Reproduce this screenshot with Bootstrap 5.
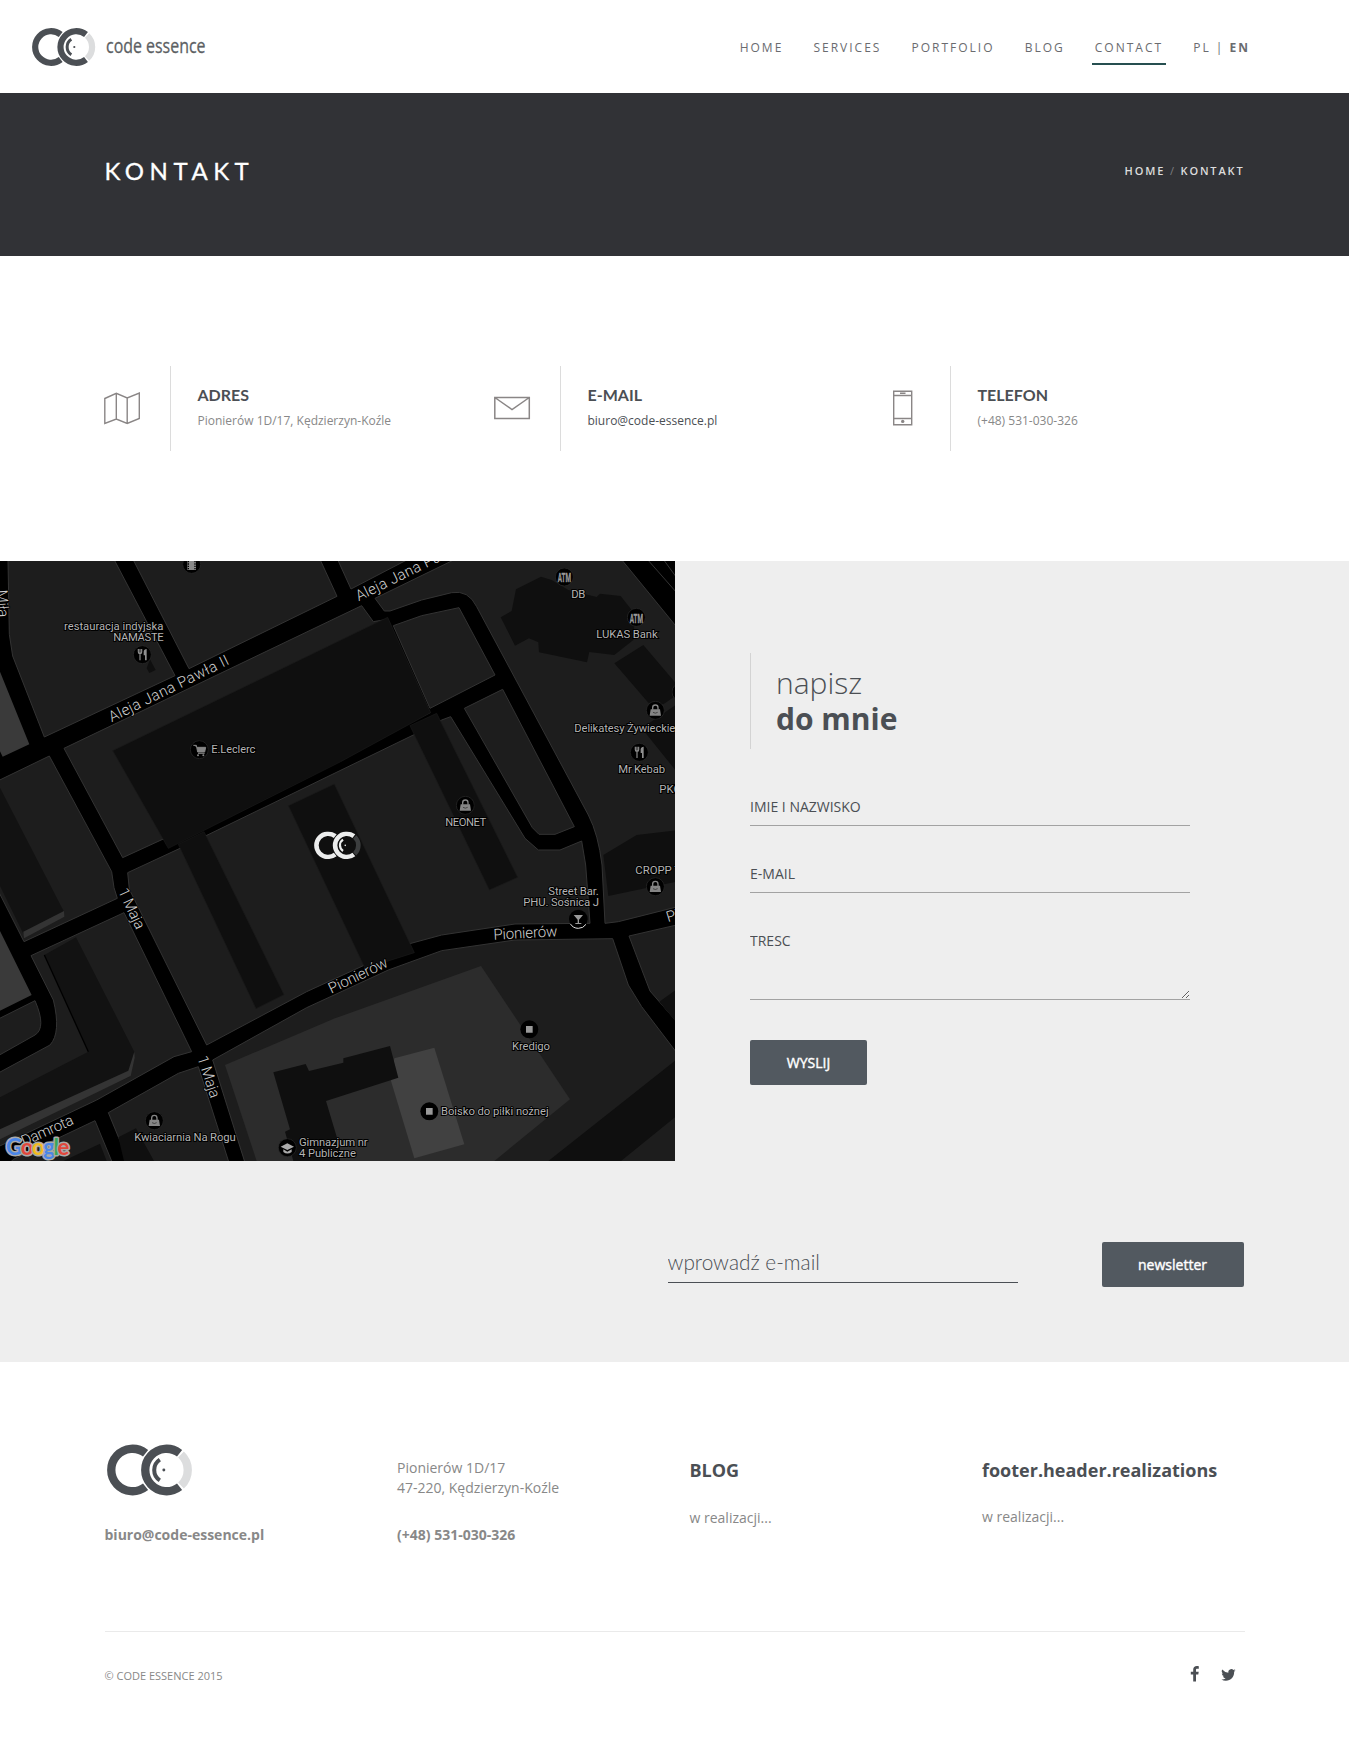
<!DOCTYPE html>
<html lang="pl">
<head>
<meta charset="utf-8">
<meta name="viewport" content="width=device-width, initial-scale=1">
<title>Kontakt - code essence</title>
<link href="https://cdn.jsdelivr.net/npm/bootstrap@5.3.0/dist/css/bootstrap.min.css" rel="stylesheet">
<style>
body{font-family:"Open Sans",sans-serif;font-size:14px;line-height:20px;color:#888;background:#fff}
a{color:inherit;text-decoration:none}
.container{max-width:1170px;padding:0 15px}
.site-head{height:93px;padding:0 96px 0 32px}
.main-nav{font-size:12px;letter-spacing:2px;gap:24.1px;color:#6a6b6f}
.main-nav .nav-link{padding:9.5px 3px 5.5px;border-bottom:2px solid transparent;color:inherit;line-height:20px}
.main-nav .nav-link.active{border-color:#264f50}
.title-band{height:163px;background:#313236;padding-bottom:7px}
.title-band h1{font:400 24px/30px Lato,sans-serif;letter-spacing:5.5px;color:#fff;-webkit-text-stroke:.3px #fff}
.crumbs{font-size:11px;font-weight:600;letter-spacing:1.85px;color:#dcdcdc}
.crumbs i{font-style:normal;font-weight:400;color:#7d7e80}
.info{padding:110px 0}
.info-item{width:390px;height:85px;flex:none}
.info-item:last-child{width:360px}
.info-icon{width:65px;padding-right:28px}
.info-icon svg{display:inline-block;margin:0 0 2px -1px}
.info-text{border-left:1px solid #dcdcdc;padding:19px 0 0 27px;height:85px;font-size:12px}
.info-text h2{font:700 16px/20px Lato,sans-serif;color:#4b4f54;margin:0 0 6px}
.ink{color:#4b4f54}
.gray-zone{background:#eee;height:801px}
.map-box{width:675px;height:600px;background:#000}
.write{padding:92px 0 0 75px;width:515px}
.write-head{border-left:1px solid #d3d3d3;padding:12px 0 12px 25px;font-size:30px;line-height:36px;color:#4b4f54;font-weight:300;margin-bottom:39px}
.write-head b{font-weight:700}
.line-field{display:block;width:100%;border:0;border-bottom:1px solid #a2a2a2;background:none;padding:0;color:#4b4f54;height:38px;margin-bottom:29px;border-radius:0;outline:0}
.line-field::placeholder{color:#4b4f54;opacity:1}
textarea.line-field{height:78px;padding-top:9px;margin-bottom:40px;resize:both}
.btn-slate{background:#525960;color:#fff;border:0;border-radius:2px;height:45px;width:117px;font-size:14px;font-weight:400;-webkit-text-stroke:.4px #fff;padding:0}
.news{padding-top:81px}
.news .btn-slate{width:142px;margin-right:1px}
.news .line-field{width:350px;height:41px;margin:0 84px 0 0;padding-bottom:2px;border-color:#4b4f54;font:300 20.8px/24px Lato,sans-serif}
.foot-cols{height:269px;padding-top:82px}
.foot-cols h3{font-size:18px;font-weight:700;line-height:24px;color:#4b4f54;margin:14px 0 25px}
.foot-addr{padding-top:14px}
.foot-end{border-top:1px solid #eaeaea;padding-top:34px}
.copy{font-size:11px}
.social{gap:21px;padding-right:9px}
.road{font:300 45px Roboto,sans-serif;fill:#d0d0d0;stroke:#000;stroke-width:5px;paint-order:stroke}
.poi{font:400 34px Roboto,sans-serif;fill:#b4b4b4;stroke:#000;stroke-width:6px;paint-order:stroke}
.bld{fill:#0f0f0f}
</style>
</head>
<body>
<svg width="0" height="0" class="position-absolute" aria-hidden="true">
  <symbol id="cc" viewBox="0 0 64 38">
    <g fill="none" stroke="currentColor" stroke-width="6.2">
      <path d="M28.7 6.55A15.8 15.8 0 1 0 28.7 31.45"/>
      <path d="M54 6.55A15.8 15.8 0 1 0 54 31.45"/>
      <path d="M55.07 7.44A15.8 15.8 0 0 1 55.07 30.56" stroke="var(--faint,#dcddde)"/>
      <path d="M39.3 11.3A9.2 9.2 0 0 0 39.3 26.7" stroke-width="3"/>
    </g>
    <circle cx="42.3" cy="19" r="1.1" fill="currentColor"/>
  </symbol>
  <symbol id="disc" viewBox="-28 -28 56 56"><circle r="27" fill="#000" stroke="#2e2e2e" stroke-width="2"/></symbol>
  <symbol id="bag" viewBox="-28 -28 56 56"><circle r="27" fill="#000" stroke="#2e2e2e" stroke-width="2"/><path d="M-14-3h28l3 19h-34z" fill="#858585"/><path d="M-8-2v-6a8 8 0 0 1 16 0v6" fill="none" stroke="#858585" stroke-width="4"/><path d="M-7 6q7 5 14 0" fill="none" stroke="#222" stroke-width="2"/></symbol>
  <symbol id="fork" viewBox="-28 -28 56 56"><circle r="27" fill="#000" stroke="#2e2e2e" stroke-width="2"/><path d="M-12-17v9q0 5 5 5t5-5v-9M-7-17v34" fill="none" stroke="#8e8e8e" stroke-width="3.5"/><path d="M13-17v34h-5V2h-4v-11q1-8 9-8z" fill="#8e8e8e"/></symbol>
  <symbol id="sq" viewBox="-28 -28 56 56"><circle r="27" fill="#000"/><path d="M-10-10h20v20h-20z" fill="#999"/></symbol>
</svg>

<header class="site-head d-flex align-items-center justify-content-between">
  <a href="#" class="ink d-flex align-items-center">
    <svg width="64" height="38"><use href="#cc"/></svg>
    <svg width="110" height="38" class="ms-2 overflow-visible"><text x="2" y="24.500" font-size="19.5" font-family="Open Sans" fill="#5c5f63" stroke="#5c5f63" stroke-width=".3" textLength="99.500" lengthAdjust="spacingAndGlyphs">code essence</text></svg>
  </a>
  <nav class="nav main-nav">
    <a class="nav-link" href="#">HOME</a>
    <a class="nav-link" href="#">SERVICES</a>
    <a class="nav-link" href="#">PORTFOLIO</a>
    <a class="nav-link" href="#">BLOG</a>
    <a class="nav-link active" href="#">CONTACT</a>
    <span class="nav-link">PL | <b>EN</b></span>
  </nav>
</header>

<section class="title-band d-flex align-items-center">
  <div class="container d-flex align-items-center justify-content-between">
    <h1 class="m-0">KONTAKT</h1>
    <div class="crumbs">HOME<i> / </i>KONTAKT</div>
  </div>
</section>

<section class="info">
  <div class="container d-flex">
    <div class="info-item d-flex align-items-center">
      <div class="info-icon"><svg width="37" height="34" fill="none" stroke="#8a8686" stroke-width="1.4"><path d="M.8 7.5 12.3 2.3 23.2 7 35.3 2v25.500L23.200 32.500 12.300 28 .8 32.500zM12.300 2.300v25.700M23.200 7v25.500"/></svg></div>
      <div class="info-text"><h2>ADRES</h2>Pionierów 1D/17, Kędzierzyn-Koźle</div>
    </div>
    <div class="info-item d-flex align-items-center">
      <div class="info-icon"><svg width="37" height="24" fill="none" stroke="#8a8686" stroke-width="1.5"><path d="M.8 1.500h34.500v21H.8zM.8 1.500l17.200 12 17.300-12"/></svg></div>
      <div class="info-text"><h2>E-MAIL</h2><a href="#" class="ink">biuro@code-essence.pl</a></div>
    </div>
    <div class="info-item d-flex align-items-center">
      <div class="info-icon text-end"><svg width="30" height="36" fill="none" stroke="#8a8686" stroke-width="1.4"><path d="M1.700 1.200h18v33.500h-18zM1.700 5.500h18M1.700 28.500h18M8 3.200h5.500"/><circle cx="10.700" cy="31.400" r="1.700" fill="#8a8686" stroke="none"/></svg></div>
      <div class="info-text"><h2>TELEFON</h2>(+48) 531-030-326</div>
    </div>
  </div>
</section>

<section class="gray-zone">
  <div class="d-flex">
    <div class="map-box">
      <svg class="d-block" width="675" height="600" viewBox="0 0 2025 1800">
        <rect width="2025" height="1800"/>
        <!-- city blocks between streets -->
        <g fill="#1d1d1d" stroke="#333" stroke-width="3">
          <path d="M24-5 28 220 38 285 133 528 525 344 342-5zM400-3 567 323 1011 106 960-5zM1013-4 1053 84 1222-4z"/>
          <path d="M1125 112 1153 150H1170L1265 117 1355 95Q1405 86 1430 137L1765 762Q1795 820 1806 912L1815 1087 1855 1082 2030 1038V198L1864-5H1365z"/>
          <path d="M1180 194 1265 164 1377 140 1485 342 1290 442zM1393 442 1508 385 1723 797 1665 820H1617L1597 800z"/>
          <path d="M192 562 1085 134 1120 182 1163 175 1290 455 505 850 490 834 368 890z"/>
          <path d="M383 935 540 862 1240 522 1325 477 1352 467 1575 832 1615 867H1680L1745 840 1757 912 1770 1087 1545 1089 1325 1122 1233 1147 1090 1214 920 1292 620 1452 388 985z"/>
          <path d="M-5 659 148 585 335 932 342 980 352 1012 72 1142-5 990z"/>
          <path d="M-5 1374 105 1319Q140 1400 105 1422L-5 1484z"/>
          <path d="M93 1184 372 1055 575 1472 522 1487 290 1617-5 1757V1536L150 1452Q184 1415 160 1317z"/>
          <path d="M325 1655 535 1537 595 1517 687 1805H387zM40 1795 285 1679 337 1805H30z"/>
          <path d="M638 1497 920 1340 1165 1227 1325 1169 1545 1137 1838 1133 1885 1272 1925 1337 2030 1475V1805H735z"/>
          <path d="M1887 1125 2030 1092V1382L1950 1290 1925 1225z"/>
          <path d="M1942-5 2030 95M1990-5 2030 50"/>
        </g>
        <path d="M-5 320 88 550 8 587-5 560zM-5 1100 95 1302-5 1352z" fill="#3a3a3a"/>
        <path d="M675 1512 1005 1372 1443 1215 1710 1615 1483 1800H770z" fill="#2c2c2c"/>
        <path d="M1183 1492 1303 1460 1393 1750 1243 1792 1173 1560z" fill="#414141"/>
        <!-- buildings -->
        <g class="bld">
          <path d="M338 569 1163 169 1292 455 1022 602 505 862z" stroke="#191919" stroke-width="2"/>
          <path d="M535 850 612 812 852 1301 768 1343zM865 734 1003 669 1243 1175 1095 1222zM1230 494 1310 457 1553 949 1468 987z" stroke="#191919" stroke-width="2"/>
          <path d="M1502 169 1535 150 1548 85 1623 47 1655 57 1705 87 1790 108 1800 98 1862 105 1905 160 1900 237 1843 282 1768 273 1761 304 1617 274 1615 244 1587 232 1545 254z"/>
          <path d="M1843 307 1930 252 2030 370V402L1990 430 1945 425zM1925 502 2030 430V632zM1810 882 1910 822 2030 808V962L1825 1005z"/>
          <path d="M820 1534 917 1509 927 1530 1030 1505V1492L1170 1455 1195 1550 978 1620 1020 1760V1800H880L855 1712 870 1705z"/>
          <path d="M1645 1800 2030 1495V1665L1863 1800zM1978 1322 2030 1285V1385z"/>
          <path d="M440 322 448 336 467 327 450 295zM355 1729 408 1702 462 1800H372zM190 1800 300 1748 320 1800z"/>
        </g>
        <path d="M0 680 192 1052 70 1118 0 975zM133 1182 228 1129 403 1472 390 1547 0 1720V1609L265 1472z" fill="#121212"/>
        <path d="M192 1050 193 1067 72 1132 70 1112zM403 1472 404 1490 392 1545 0 1735V1705L385 1529z" fill="#343434"/>
        <path d="M133 1182 265 1472" stroke="#000" stroke-width="4"/>
        <!-- street names -->
        <g class="road">
          <text transform="translate(335 484) rotate(-26.300)" textLength="396">Aleja Jana Pawła II</text>
          <text transform="translate(1076 121) rotate(-26.300)" textLength="350">Aleja Jana Pawła</text>
          <text transform="translate(-10 88) rotate(86)" textLength="82">Miła</text>
          <text transform="translate(354 990) rotate(65)" textLength="130">1 Maja</text>
          <text transform="translate(592 1490) rotate(72)" textLength="130">1 Maja</text>
          <text transform="translate(994 1298) rotate(-25.500)" textLength="192">Pionierów</text>
          <text transform="translate(1481 1136) rotate(-3)" textLength="192">Pionierów</text>
          <text transform="translate(2004 1084) rotate(-17)">Pi</text>
          <text transform="translate(72 1756) rotate(-24)" textLength="166">Damrota</text>
        </g>
        <!-- places -->
        <use href="#disc" x="547" y="-18" width="56" height="56"/><path d="M562 0h26v27h-26z" fill="#8a8a8a"/><path d="M565 0v27M585 0v27" stroke="#000" stroke-width="4" stroke-dasharray="4 3"/>
        <use href="#fork" x="399" y="253" width="56" height="56"/>
        <use href="#disc" x="570" y="538" width="56" height="56"/><path d="M580 553h9l4 20h21l3-14h-26M594 577h20" fill="#858585" stroke="#858585" stroke-width="3"/><circle cx="594" cy="583" r="3" fill="#858585"/><circle cx="610" cy="583" r="3" fill="#858585"/>
        <use href="#disc" x="1665" y="20" width="56" height="56"/><use href="#disc" x="1881" y="141" width="56" height="56"/>
        <use href="#bag" x="1938" y="420" width="56" height="56"/><use href="#fork" x="1890" y="546" width="56" height="56"/>
        <use href="#bag" x="1368" y="705" width="56" height="56"/><use href="#bag" x="1938" y="949" width="56" height="56"/>
        <use href="#disc" x="2015" y="365" width="56" height="56"/>
        <circle cx="1735" cy="1074" r="28" stroke="#ddd" stroke-width="3" stroke-dasharray="55 200" stroke-dashoffset="-17"/><path d="M1721 1062h28l-12 14v10h7v3h-18v-3h7v-10z" fill="#999"/>
        <use href="#sq" x="1560" y="1377" width="56" height="56"/><use href="#sq" x="1260" y="1623" width="56" height="56"/>
        <use href="#bag" x="435" y="1651" width="56" height="56"/>
        <use href="#disc" x="834" y="1732" width="56" height="56"/><path d="M842 1757 862 1747 882 1757 862 1767zM850 1765 862 1772 875 1765V1773Q862 1782 850 1773z" fill="#aaa"/>
        <g class="poi">
          <text x="192" y="207" textLength="298">restauracja indyjska</text><text x="340" y="240" textLength="151">NAMASTE</text>
          <text x="634" y="576" textLength="132">E.Leclerc</text>
          <text x="1714" y="111" textLength="42">DB</text><text x="1789" y="231" textLength="184">LUKAS Bank</text>
          <text x="1723" y="513" textLength="303">Delikatesy Żywieckie</text><text x="1855" y="636" textLength="140">Mr Kebab</text><text x="1978" y="696">PKO</text>
          <text x="1336" y="795" textLength="123">NEONET</text><text x="1906" y="938">CROPP T</text>
          <text x="1645" y="1002" textLength="151">Street Bar.</text><text x="1570" y="1035" textLength="227">PHU. Sośnica J</text>
          <text x="1536" y="1467" textLength="114">Kredigo</text><text x="1323" y="1661" textLength="323">Boisko do piłki nożnej</text>
          <text x="403" y="1739" textLength="304">Kwiaciarnia Na Rogu</text>
          <text x="897" y="1754" textLength="206">Gimnazjum nr</text><text x="897" y="1787" textLength="171">4 Publiczne</text>
        </g>
        <g fill="#999" stroke="#999" font-family="Roboto" font-weight="700" font-size="39"><text x="1673" y="64" textLength="40" lengthAdjust="spacingAndGlyphs">ATM</text><text x="1889" y="185" textLength="40" lengthAdjust="spacingAndGlyphs">ATM</text></g>
        <svg x="942" y="811" width="142" height="84" color="#eceded" style="--faint:#3c3e3f"><use href="#cc"/></svg>
        <text x="18" y="1782" textLength="190" font-family="Lato" font-weight="700" font-size="66" stroke="#aaa" stroke-width="9" stroke-linejoin="round" paint-order="stroke"><tspan fill="#4a86e8">G</tspan><tspan fill="#e2473b">o</tspan><tspan fill="#f3bc1c">o</tspan><tspan fill="#4a86e8">g</tspan><tspan fill="#3aa757">l</tspan><tspan fill="#e2473b">e</tspan></text>
      </svg>
    </div>
    <form class="write">
      <div class="write-head">napisz<br><b>do mnie</b></div>
      <input class="line-field" placeholder="IMIE I NAZWISKO">
      <input class="line-field" placeholder="E-MAIL">
      <textarea class="line-field" placeholder="TRESC"></textarea>
      <button type="button" class="btn btn-slate">WYSLIJ</button>
    </form>
  </div>
  <div class="news"><div class="container d-flex justify-content-end">
    <input class="line-field" placeholder="wprowadź e-mail">
    <button type="button" class="btn btn-slate">newsletter</button>
  </div></div>
</section>

<footer>
  <div class="container">
    <div class="row foot-cols" style="--bs-gutter-x:30px">
      <div class="col-3"><svg class="d-block ink" width="86" height="52" style="margin-left:2.500px"><use href="#cc"/></svg><b class="d-block" style="margin-top:29px">biuro@code-essence.pl</b></div>
      <div class="col-3"><div class="foot-addr">Pionierów 1D/17<br>47-220, Kędzierzyn-Koźle</div><b class="d-block" style="margin-top:27px">(+48) 531-030-326</b></div>
      <div class="col-3"><h3>BLOG</h3><div class="mt-n1" style="padding-top:1px">w realizacji...</div></div>
      <div class="col-3"><h3 class="text-nowrap">footer.header.realizations</h3>w realizacji...</div>
    </div>
    <div class="foot-end d-flex justify-content-between">
      <span class="copy">© CODE ESSENCE 2015</span>
      <div class="ink d-flex social">
        <svg width="10" height="16" viewBox="0 0 10 16" fill="currentColor"><path d="M8.800.3v2.500H7.300C6.200 2.800 6 3.300 6 4v1.700h2.700l-.4 2.700H6V15.500H3.200V8.400H.8V5.700h2.400v-2C3.200 1.400 4.700.1 6.800.1c1 0 1.800.1 2 .2z"/></svg>
        <svg width="15" height="17" viewBox="0 0 14 16" fill="currentColor"><path d="M13.700 4a5.600 5.600 0 0 1-1.400 1.500c.2 4.500-3 8.400-7.700 8.400A7.900 7.900 0 0 1 .3 12.700a5.600 5.600 0 0 0 4-1.100 2.800 2.800 0 0 1-2.600-2h1.200A2.800 2.800 0 0 1 .7 6.800l1.300.4a2.800 2.800 0 0 1-.9-3.800A7.900 7.900 0 0 0 6.900 6.300a2.800 2.800 0 0 1 4.800-2.500l1.700-.7-1.200 1.500z"/></svg>
      </div>
    </div>
  </div>
</footer>
<script src="https://cdn.jsdelivr.net/npm/bootstrap@5.3.0/dist/js/bootstrap.bundle.min.js"></script>
</body>
</html>
